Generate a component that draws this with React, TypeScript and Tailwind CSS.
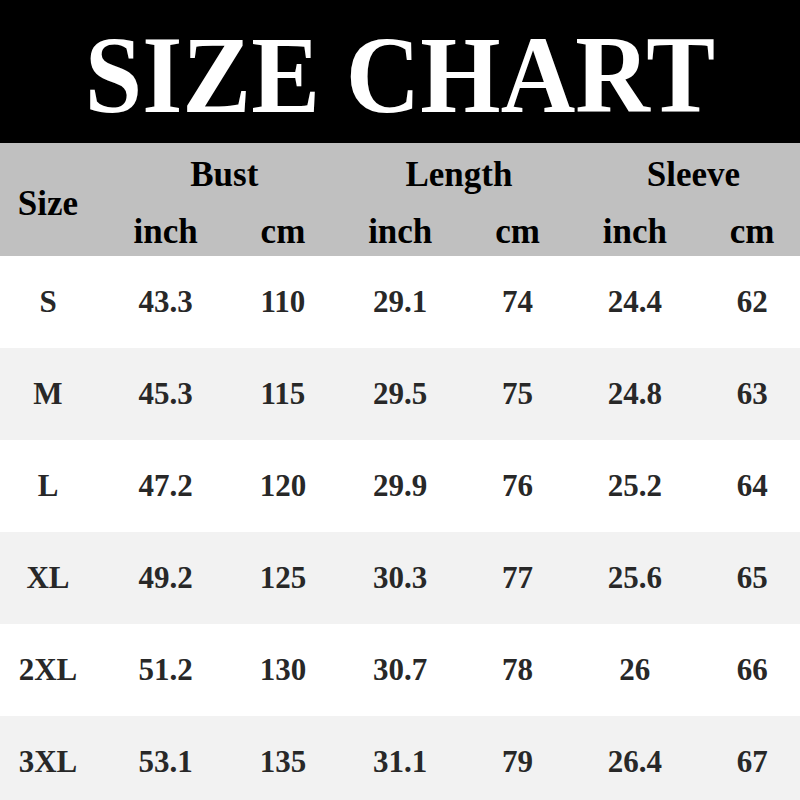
const rows = [
  ["S", "43.3", "110", "29.1", "74", "24.4", "62"],
  ["M", "45.3", "115", "29.5", "75", "24.8", "63"],
  ["L", "47.2", "120", "29.9", "76", "25.2", "64"],
  ["XL", "49.2", "125", "30.3", "77", "25.6", "65"],
  ["2XL", "51.2", "130", "30.7", "78", "26", "66"],
  ["3XL", "53.1", "135", "31.1", "79", "26.4", "67"],
];

const groups = ["Bust", "Length", "Sleeve"];

export default function App() {
  return (
    <div className="h-[800px] w-[800px] overflow-hidden bg-white font-['Liberation_Serif','Times_New_Roman',serif] font-bold">
      <header className="flex h-[143px] items-center justify-center bg-black pt-[6px]">
        <h1 className="scale-x-[0.93] text-[111px] leading-none text-white">SIZE CHART</h1>
      </header>

      <div className="grid h-[113px] grid-cols-[107px_repeat(6,117.3px)] grid-rows-[62px_51px] bg-[#c0c0c0] text-[35px] text-black">
        <div className="row-span-2 flex items-center justify-center pr-[11px] pt-[10px]">Size</div>
        {groups.map((g) => (
          <div key={g} className="col-span-2 flex items-center justify-center pt-[2px]">
            {g}
          </div>
        ))}
        {groups.map((g) => [
          <div key={g + "-in"} className="flex items-center justify-center pt-[4px]">inch</div>,
          <div key={g + "-cm"} className="flex items-center justify-center pt-[4px]">cm</div>,
        ])}
      </div>

      {rows.map((row, i) => (
        <div
          key={row[0]}
          className={`grid h-[92px] grid-cols-[107px_repeat(6,117.3px)] text-[31px] text-[#282828] ${
            i % 2 === 1 ? "bg-[#f2f2f2]" : "bg-white"
          }`}
        >
          {row.map((cell, j) => (
            <div
              key={j}
              className={`flex items-center justify-center ${j === 0 ? "pr-[11px]" : ""}`}
            >
              {cell}
            </div>
          ))}
        </div>
      ))}
    </div>
  );
}
